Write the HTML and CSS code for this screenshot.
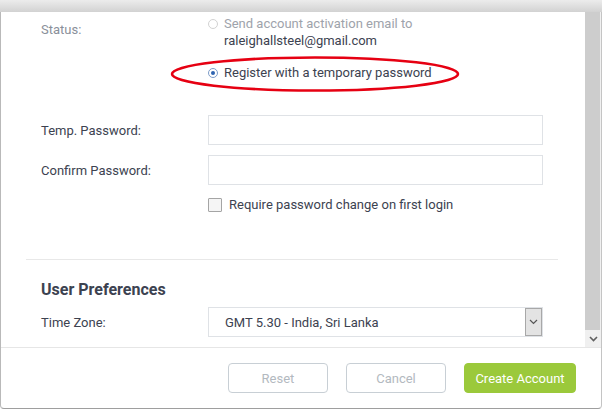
FILE: index.html
```html
<!DOCTYPE html>
<html>
<head>
<meta charset="utf-8">
<link rel="stylesheet" href="styles.css">
</head>
<body>
<div class="torn"></div>
<div class="dialog">
  <div class="scroll-area">
    <div class="content">
      <div class="row row-status">
        <div class="label label-muted">Status:</div>
        <div class="options">
          <div class="option">
            <span class="radio radio-disabled"></span>
            <span class="option-text"><span class="muted">Send account activation email to</span><br>raleighallsteel@gmail.com</span>
          </div>
          <div class="option option-second">
            <span class="radio radio-checked"></span>
            <span class="option-text">Register with a temporary password</span>
          </div>
        </div>
      </div>
      <div class="row row-field row-temp">
        <div class="label">Temp. Password:</div>
        <div class="input"></div>
      </div>
      <div class="row row-field row-confirm">
        <div class="label">Confirm Password:</div>
        <div class="input"></div>
      </div>
      <div class="row row-check">
        <div></div>
        <div class="check-line"><span class="checkbox"></span><span>Require password change on first login</span></div>
      </div>
      <div class="divider"></div>
      <h3 class="section-title">User Preferences</h3>
      <div class="row row-field row-tz">
        <div class="label">Time Zone:</div>
        <div class="select">
          <span class="select-text">GMT 5.30 - India, Sri Lanka</span>
          <span class="select-arrow"><svg width="9" height="6" viewBox="0 0 9 6"><path d="M1 1 L4.5 4.5 L8 1" fill="none" stroke="#555" stroke-width="1.2"/></svg></span>
        </div>
      </div>
    </div>
    <div class="scrollbar">
      <div class="thumb"></div>
      <div class="scroll-btn"><svg width="9" height="6" viewBox="0 0 9 6"><path d="M1 1 L4.5 4.5 L8 1" fill="none" stroke="#606060" stroke-width="1.6"/></svg></div>
    </div>
  </div>
  <div class="footer">
    <button class="btn btn-ghost btn-reset">Reset</button>
    <button class="btn btn-ghost btn-cancel">Cancel</button>
    <button class="btn btn-primary">Create Account</button>
  </div>
</div>
<svg class="highlight" width="292" height="40" viewBox="0 0 292 40"><ellipse cx="145" cy="19" rx="143" ry="16.5" fill="none" stroke="#e60012" stroke-width="2.6"/></svg>
</body>
</html>
```
FILE: styles.css
```css
* { box-sizing: border-box; }
html, body { margin: 0; padding: 0; }
body {
  width: 602px;
  height: 410px;
  overflow: hidden;
  position: relative;
  background: #ffffff;
  font-family: Roboto, "Liberation Sans", sans-serif;
  font-size: 13px;
  color: #3c4250;
}
.torn {
  height: 12px;
  background: linear-gradient(#ececec, #d2d2d2);
}
.dialog {
  height: 397px;
  border-left: 1px solid #b9b9b9;
  border-right: 1px solid #c4c4c4;
  border-bottom: 1px solid #9e9e9e;
  border-radius: 0 0 4px 4px;
  display: flex;
  flex-direction: column;
  background: #fff;
}
.scroll-area {
  height: 335px;
  display: flex;
}
.content {
  flex: 1;
  overflow: hidden;
  padding-top: 3px;
}
.scrollbar {
  width: 16px;
  display: flex;
  flex-direction: column;
  background: #f0f0f0;
}
.thumb {
  flex: 1;
  background: #cdcdcd;
  margin-right: 1px;
}
.scroll-btn {
  height: 17px;
  display: flex;
  align-items: center;
  justify-content: center;
}
.row {
  display: grid;
  grid-template-columns: 167px 335px;
  padding-left: 40px;
  line-height: 17px;
}
.row-status { align-items: start; }
.row-field { align-items: center; }
.label { color: #3c4250; }
.label-muted { color: #8a909a; margin-top: 6px; }
.options { display: flex; flex-direction: column; }
.option { display: flex; align-items: flex-start; }
.option-second { margin-top: 15px; }
.option-text { margin-left: 6px; color: #3c4250; }
.muted { color: #9ea3ab; }
.radio {
  width: 10px;
  height: 10px;
  border-radius: 50%;
  margin-top: 4px;
  flex: none;
  background: #fff;
}
.radio-disabled { border: 1px solid #d2d2d2; }
.radio-checked {
  border: 1px solid #7d9cc8;
  display: flex;
  align-items: center;
  justify-content: center;
}
.radio-checked::after {
  content: "";
  width: 4px;
  height: 4px;
  border-radius: 50%;
  background: #2f64b0;
}
.row-temp { margin-top: 34px; }
.row-confirm { margin-top: 10px; }
.input {
  height: 30px;
  border: 1px solid #dfe2e6;
  background: #fff;
}
.row-check { margin-top: 11px; }
.check-line { display: flex; align-items: center; height: 17px; }
.checkbox {
  width: 14px;
  height: 14px;
  border: 1px solid #a5a5a5;
  background: #f5f5f5;
  border-radius: 1px;
  margin-right: 7px;
  flex: none;
}
.divider {
  margin: 46px 27px 0 25px;
  height: 1px;
  background: #e8e8e8;
}
.section-title {
  margin: 20px 0 0;
  padding-left: 40px;
  font-size: 16px;
  line-height: 20px;
  font-weight: 700;
  color: #3c4250;
}
.row-tz { margin-top: 7px; }
.select {
  height: 30px;
  border: 1px solid #dfe2e6;
  display: flex;
  align-items: stretch;
}
.select-text {
  flex: 1;
  padding-left: 16px;
  display: flex;
  align-items: center;
  color: #3c4250;
}
.select-arrow {
  width: 17px;
  background: #e3e3e3;
  border: 1px solid #a8a8a8;
  display: flex;
  align-items: center;
  justify-content: center;
}
.footer {
  border-top: 1px solid #e6e6e6;
  padding: 15px 25px 15px 0;
  display: flex;
  justify-content: flex-end;
  gap: 18px;
}
.btn {
  height: 30px;
  border-radius: 4px;
  font-family: Roboto, "Liberation Sans", sans-serif;
  font-size: 13px;
  padding: 0;
  cursor: default;
}
.btn-ghost {
  background: #fff;
  border: 1px solid #c8cfd5;
  color: #b3b9c0;
}
.btn-reset { width: 100px; }
.btn-cancel { width: 100px; }
.btn-primary {
  width: 112px;
  background: #9bc93b;
  border: 1px solid #9bc93b;
  color: #fff;
}
.highlight {
  position: absolute;
  left: 170px;
  top: 55px;
}
```
